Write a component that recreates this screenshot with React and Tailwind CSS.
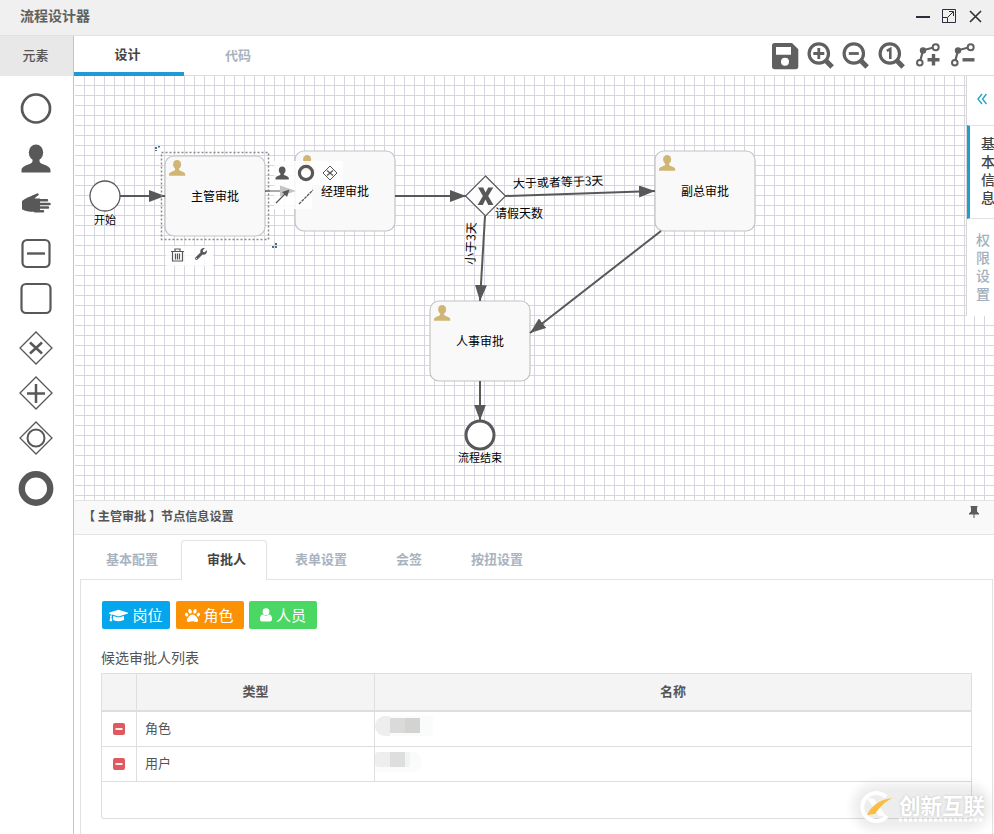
import React, { useState } from "react";
import { FaGraduationCap, FaPaw, FaWrench } from "react-icons/fa";

const INK = "#585858";

const Person = ({ x = 0, y = 0, scale = 1, fill = INK }) => (
    <g transform={`translate(${x} ${y}) scale(${scale})`} fill={fill}>
        <ellipse cx="14.5" cy="8" rx="7.200" ry="8" />
        <path d="M11 12h7v4.500c0 1.500 1.200 2.400 3 3.100 5 1.900 8 3 8 6.400v1.500q0 .5-.5.5H.5q-.5 0-.5-.5V26c0-3.400 3-4.500 8-6.400 1.800-.7 3-1.600 3-3.100z" />
    </g>
);

const Diamond = () => (
    <path d="M18 2 34 18 18 34 2 18z" fill="none" stroke={INK} strokeWidth="1.300" />
);

// Palette of BPMN elements, every drawing lives in a 36x36 box
const paletteItems = [
    {
        id: "start",
        gap: "mt-[14px]",
        art: <circle cx="18" cy="18.500" r="14" fill="none" stroke={INK} strokeWidth="2.700" />,
    },
    { id: "user", gap: "mt-[14px]", art: <Person x={3.500} y={4.500} /> },
    {
        id: "manual",
        gap: "mt-[9px]",
        art: (
            <g fill="none" stroke={INK} strokeWidth="2.500" strokeLinecap="round">
                <path d="M4 16c3.500-2.800 8.500-4.700 13-6.200 2.500-1 4-.4 2.500.8L16.500 13.500H22v13.300h-6c-5 0-9-.8-12-2.600z" fill={INK} stroke="none" />
                <path d="M14 12.200 19.500 9.500M20 15.300h9M20 19h11.500M20 22.600h10M17 26.200h8" />
            </g>
        ),
    },
    {
        id: "collapsed",
        gap: "mt-[14px]",
        art: (
            <g fill="none" stroke={INK} strokeWidth="2.200">
                <rect x="4.500" y="5" width="27" height="27" rx="4.500" />
                <path d="M9 18.500h18" strokeWidth="2.400" />
            </g>
        ),
    },
    {
        id: "task",
        gap: "mt-[9px]",
        art: <rect x="3.500" y="4" width="29" height="29" rx="4.500" fill="none" stroke={INK} strokeWidth="2.200" />,
    },
    {
        id: "exclusive",
        gap: "mt-[14px]",
        art: (
            <>
                <Diamond />
                <path d="m12 12.500 12 11m0-11-12 11" stroke={INK} strokeWidth="2.500" />
            </>
        ),
    },
    {
        id: "parallel",
        gap: "mt-[9px]",
        art: (
            <>
                <Diamond />
                <path d="M9 18.500h18M18 9v19" stroke={INK} strokeWidth="2.500" />
            </>
        ),
    },
    {
        id: "inclusive",
        gap: "mt-[9px]",
        art: (
            <>
                <Diamond />
                <circle cx="18" cy="18" r="8.500" fill="none" stroke={INK} strokeWidth="2" />
            </>
        ),
    },
    {
        id: "end",
        gap: "mt-[14px]",
        art: <circle cx="18" cy="18.500" r="14.200" fill="none" stroke={INK} strokeWidth="6.400" />,
    },
];

const Lens = ({ children }) => (
    <g fill="none" stroke="#606060">
        <circle cx="11.800" cy="11.500" r="9.700" strokeWidth="3.200" />
        <path d="m18.500 18.300 6.600 6.600" strokeWidth="5" />
        {children}
    </g>
);

const Bend = ({ children }) => (
    <g fill="none" stroke="#606060">
        <path d="M6.500 18 9 8.300 18.500 5.800" strokeWidth="2.200" />
        <circle cx="21.700" cy="5.200" r="3" strokeWidth="2" />
        <circle cx="5.800" cy="20.700" r="2.800" strokeWidth="2" />
        <circle cx="9" cy="8.500" r="3.200" fill="#606060" stroke="none" />
        {children}
    </g>
);

const tools = [
    {
        id: "save",
        art: (
            <path
                fill="#606060"
                fillRule="evenodd"
                d="M3.500 1H21l6.300 6.200v17.300q0 2.700-2.700 2.700H3.700Q1 27.200 1 24.500V3.500Q1 1 3.500 1zM5 5v7.700h15V5zM14 15.800a4 4 0 1 0 0 8 4 4 0 0 0 0-8z"
            />
        ),
    },
    { id: "zoomIn", art: <Lens><path d="M6.300 11.500h11M11.800 6v11" strokeWidth="2.800" /></Lens> },
    { id: "zoomOut", art: <Lens><path d="M6.800 11.500h10" strokeWidth="2.800" /></Lens> },
    { id: "zoomActual", art: <Lens><path d="m8.800 8.800 3.500-1.800v10" strokeWidth="2.600" /></Lens> },
    { id: "addBend", art: <Bend><path d="M13.500 17.800h12M19.500 12v11.600" strokeWidth="3.400" /></Bend> },
    { id: "removeBend", art: <Bend><path d="M13.500 17.800h12" strokeWidth="3.400" /></Bend> },
];

const tasks = [
    { name: "主管审批", x: 165, y: 156 },
    { name: "经理审批", x: 295, y: 151 },
    { name: "副总审批", x: 655, y: 151 },
    { name: "人事审批", x: 430, y: 301 },
];

const flows = [
    "M120 196H165",
    "M395 196H466",
    "M505 196 655 191",
    "M485 216 480 301",
    "M661 231 530 333",
    "M480 381V420.500",
];

const Diagram = () => (
    <svg width="920" height="424" viewBox="74 76 920 424" className="block" fontFamily="'Noto Sans CJK SC', sans-serif" fontSize="12">
        <defs>
            <pattern id="grid" x="74" y="75" width="10" height="10" patternUnits="userSpaceOnUse">
                <path d="M0 .5H10M.5 0V10" stroke="#d6d6de" strokeWidth="1" />
            </pattern>
            <marker id="arrow" markerUnits="userSpaceOnUse" markerWidth="17" markerHeight="12" refX="16" refY="6" orient="auto">
                <path d="M0 0 16 6 0 12z" fill={INK} />
            </marker>
        </defs>
        <rect x="75" y="76" width="919" height="424" fill="url(#grid)" />

        {/* Start event */}
        <circle cx="105" cy="196" r="15" fill="#fff" stroke={INK} strokeWidth="1.300" />
        <text x="105" y="224" textAnchor="middle" fontSize="11">开始</text>

        {tasks.map((task) => (
            <g key={task.name}>
                <rect x={task.x} y={task.y} width="100" height="80" rx="9" fill="#f9f9f9" stroke="#c4c4c4" strokeWidth="1.200" />
                <Person x={task.x + 4} y={task.y + 4} scale={0.56} fill="#d1b575" />
                <text x={task.x + 50} y={task.y + 45} textAnchor="middle">{task.name}</text>
            </g>
        ))}

        <path d="M265 191h7" stroke={INK} strokeWidth="1.500" />
        {flows.map((d) => (
            <path key={d} d={d} fill="none" stroke={INK} strokeWidth="2" markerEnd="url(#arrow)" />
        ))}

        {/* Exclusive gateway */}
        <path d="m485.500 176 20 20-20 20-20-20z" fill="#fdfdfd" stroke={INK} strokeWidth="1.200" />
        <path d="M478 187.500h5.200l2.400 5 2.600-5h5.100l-5.100 8.500 5.300 9h-5.200l-2.800-5.500-2.700 5.500h-5.200l5.300-9z" fill={INK} />
        <text x="495" y="218">请假天数</text>
        <text x="513" y="188" transform="rotate(-2 513 188)">大于或者等于3天</text>
        <text x="474.500" y="265" transform="rotate(-88 474.500 265)">小于3天</text>

        {/* End event */}
        <circle cx="480" cy="435" r="14" fill="#fff" stroke={INK} strokeWidth="3" />
        <text x="480" y="462" textAnchor="middle" fontSize="11">流程结束</text>

        {/* Selection frame of the active task */}
        <rect x="161.500" y="152.500" width="107" height="87" fill="none" stroke="#8a8a8a" strokeWidth="1.500" strokeDasharray="2 2" />
        <g fill="#4c7486">
            <path d="M155 147h2v2h-2zM158 146h2v1.500h-2zM155 150h2v1h-2zM272 246h2v2h-2zM275 243h2v2h-2zM275 246h2v2h-2z" />
        </g>

        {/* Quick actions */}
        <path d="M274 161h69v24h-31v24h-38z" fill="#fff" opacity=".85" />
        <path d="M270 191h11" stroke="#aaa" strokeWidth="2" />
        <path d="M280 185.500 296 191l-16 5.500z" fill="#c4c4c4" />
        <Person x={275.500} y={166.500} scale={0.46} />
        <circle cx="306" cy="173" r="6.600" fill="none" stroke={INK} strokeWidth="3.200" />
        <path d="m330 166 7 7-7 7-7-7z" fill="none" stroke={INK} />
        <path d="m327 170.500 6 5m0-5-6 5" stroke={INK} strokeWidth="1.300" />
        <path d="m276 203 10-10" stroke={INK} strokeWidth="1.300" />
        <path d="m289.500 189.500-2.500 7.500-5-5z" fill={INK} />
        <path d="m299 204 14-14" stroke={INK} strokeWidth="1.300" strokeDasharray="3 .8" />
        <path d="M166 246h47v20h-47z" fill="#fff" opacity=".8" />
        <g fill="none" stroke={INK} strokeWidth="1.200">
            <path d="M171 251.500h13M175 251v-2h5v2M172.500 252v9h10v-9M175.500 253.500v6M177.500 253.500v6M179.500 253.500v6" />
        </g>
        <FaWrench x="195" y="248" width="13" height="13" color={INK} />
    </svg>
);

const panelTabs = ["基本配置", "审批人", "表单设置", "会签", "按扭设置"];

const candidates = [
    { type: "角色", mask: "first" },
    { type: "用户", mask: "second" },
];

const Mask = ({ kind }) =>
    kind === "first" ? (
        <div className="-mt-[7px] flex h-[20px] w-[58px] items-center overflow-hidden rounded-l-full rounded-r-lg bg-[#fafbfb]">
            <span className="h-full w-[15px] bg-[#eeeeee]" />
            <span className="h-[15px] w-[15px] bg-[#dadada]" />
            <span className="h-[15px] w-[15px] bg-[#d3d3d2]" />
        </div>
    ) : (
        <div className="-mt-[5px] flex h-[20px] w-[46px] items-start overflow-hidden rounded-r-lg bg-[#fafbfb]">
            <span className="h-[15px] w-[15px] rounded-l bg-[#eeeeee]" />
            <span className="h-[15px] w-[15px] bg-[#dedede]" />
            <span className="h-[15px] w-[5px] bg-[#f2f3f3]" />
        </div>
    );

const Watermark = () => (
    <div className="absolute right-[9px] bottom-[9px] flex items-center gap-[5px] rounded-full bg-black/7 shadow-[0_0_10px_6px_rgba(0,0,0,0.07)]">
        <svg width="36" height="36" viewBox="0 0 36 36" fill="none">
            <path d="M29 27a14 14 0 1 1-1-19" stroke="#fff" strokeWidth="4" />
            <path d="m9 9 7 1 12 17h-7z" fill="#fff" />
            <path d="M9 26c4-9 13-16 26-17-8 3-14 10-18 16z" fill="#f8bd42" />
        </svg>
        <div className="flex flex-col items-start text-white [text-shadow:0_0_3px_#c4c4c4]">
            <span className="flex h-[25px] items-center text-[21.500px] leading-[25px] font-bold">创新互联</span>
            <svg width="84" height="6" viewBox="0 0 84 6" stroke="#fff" strokeWidth="3" strokeDasharray="3 2">
                <path d="M0 3h84" />
            </svg>
        </div>
    </div>
);

const App = () => {
    const [activeTab, setActiveTab] = useState("审批人");

    return (
        <div className="relative flex h-[834px] w-[994px] flex-col overflow-hidden bg-white font-['Noto_Sans_CJK_SC',sans-serif] text-[13px] text-[#555]">
            {/* Title bar */}
            <header className="flex h-9 shrink-0 items-center justify-between border-b border-[#e0e0e0] bg-[#f0f0f0] pr-[12px] pb-[4px] pl-[20px]">
                <h1 className="text-[14px] font-semibold text-[#606060]">流程设计器</h1>
                <svg width="68" height="18" viewBox="0 0 68 18" fill="none" stroke="#2e2d3c">
                    <path d="M2 10h14" strokeWidth="2" />
                    <path d="M28.500 2.500h13v13h-13zM28.500 10.500h5v5h-5zM34 10l5-5M35 4.500h4.500V9" />
                    <path d="m56 4 11 11m0-11L56 15" strokeWidth="1.600" />
                </svg>
            </header>

            <div className="flex min-h-0 flex-1">
                {/* Palette */}
                <aside className="w-[74px] shrink-0 border-r border-[#c4c4c4]">
                    <div className="flex h-10 items-center justify-center bg-[#e8e8e8] pr-[2px] pb-[2px] font-medium">元素</div>
                    <div className="flex flex-col items-center pr-px">
                        {paletteItems.map((item) => (
                            <svg key={item.id} width="36" height="36" viewBox="0 0 36 36" className={`${item.gap} shrink-0`}>
                                {item.art}
                            </svg>
                        ))}
                    </div>
                </aside>

                <main className="flex min-w-0 flex-1 flex-col">
                    <div className="flex h-10 shrink-0 border-b border-[#dddddd]">
                        <button className="-mb-px w-[110px] border-b-4 border-[#1f9ad6] pr-[3px] font-semibold text-[#444]">设计</button>
                        <button className="w-[108px] pb-[2px] font-semibold text-[#a9b3c0]">代码</button>
                        <div className="ml-auto flex items-center pr-[13px]">
                            {tools.map((tool) => (
                                <span key={tool.id} className="flex w-[35.600px] justify-center">
                                    <svg width="28" height="28" viewBox="0 0 28 28">{tool.art}</svg>
                                </span>
                            ))}
                        </div>
                    </div>

                    <div className="relative h-[424px] shrink-0 overflow-hidden">
                        <Diagram />
                        {/* Collapsible settings rail */}
                        <div className="absolute top-0 right-0 h-[240px] w-[28px] overflow-hidden border-l border-[#d6d6da] bg-white text-[14px] leading-[18px] font-medium">
                            <div className="flex h-[49px] items-center justify-center pb-[3px] pl-[3px]">
                                <svg width="12" height="12" viewBox="0 0 12 12" fill="none" stroke="#2aa5bf" strokeWidth="1.400">
                                    <path d="M6 1 2 6l4 5M10.500 1l-4 5 4 5" />
                                </svg>
                            </div>
                            <div className="h-[94px] w-[40px] border-y border-l-[3px] border-y-[#e2e2e2] border-l-[#1f9fc9] pt-[8px] pl-[11px] text-[#444]">
                                <div className="w-[14px]">基本信息</div>
                            </div>
                            <div className="mt-[11px] ml-[9px] w-[14px] text-[#a3b0c0]">权限设置</div>
                        </div>
                    </div>

                    {/* Node settings */}
                    <section className="flex min-h-0 flex-1 flex-col">
                        <div className="flex h-[35px] shrink-0 justify-between border-y border-[#e4e4e4] bg-[#f9f9f9] pr-[15px] pl-[9px]">
                            <span className="pt-[6px] text-[12.100px] font-semibold">【 主管审批 】节点信息设置</span>
                            <svg width="10" height="12" viewBox="0 0 10 12" className="mt-[5px]" fill="#5c5c5c">
                                <path d="M1.500 0h7v1.300H8V5.500l2 2V8.500H5.500V12h-1V8.500H0v-1l2-2V1.300h-.5z" />
                            </svg>
                        </div>
                        <nav className="ml-[6px] flex h-[44px] shrink-0 pt-[5px]">
                            {panelTabs.map((tab) => (
                                <button
                                    key={tab}
                                    onClick={() => setActiveTab(tab)}
                                    className={`mr-[2px] h-[40px] rounded-t border pr-[20px] pb-[2px] pl-[25px] text-[13px] font-semibold ${activeTab === tab
                                        ? "relative border-[#e2e2e2] border-b-white bg-white text-[#444]"
                                        : "border-transparent text-[#a9b3c0]"
                                        }`}
                                >
                                    {tab}
                                </button>
                            ))}
                        </nav>
                        <div className="mr-px ml-[6px] flex-1 border-x border-t border-[#e2e2e2] pt-[21px] pr-[20px] pl-[20px]">
                            <div className="ml-px flex text-[15px] leading-[28px] text-white">
                                <button className="mr-[6px] flex h-[28px] w-[68px] items-center justify-center gap-[4px] rounded-[2px] bg-[#06a6ec]">
                                    <FaGraduationCap size={19} />岗位
                                </button>
                                <button className="mr-[5px] flex h-[28px] w-[68px] items-center justify-center gap-[3px] rounded-[2px] bg-[#fb9205] pr-px">
                                    <FaPaw size={15} />角色
                                </button>
                                <button className="flex h-[28px] w-[68px] items-center justify-center gap-[4px] rounded-[2px] bg-[#4bd763]">
                                    <svg width="12" height="14" viewBox="0 0 12 14" fill="currentColor">
                                        <circle cx="6" cy="3.700" r="3.400" />
                                        <path d="M3 6.500c-2 0-3 1.800-3 4.500C0 12.700.8 13.500 2.300 13.500h7.400c1.500 0 2.300-.8 2.300-2.500 0-2.700-1-4.500-3-4.500-1.800 1.500-4.200 1.500-6 0z" />
                                    </svg>
                                    人员
                                </button>
                            </div>
                            <p className="mt-[18px] h-[26px] text-[14px] leading-[21px]">候选审批人列表</p>
                            <div className="h-[146px] w-[871px] rounded-b-[2px] border border-[#dedede]">
                                <div className="grid h-[38px] grid-cols-[35px_238px_1fr] border-b-2 border-[#dedede] bg-[#f4f4f4] text-center leading-[34px] font-semibold">
                                    <span className="border-r border-[#dedede]" />
                                    <span className="border-r border-[#dedede]">类型</span>
                                    <span>名称</span>
                                </div>
                                {candidates.map((row) => (
                                    <div key={row.type} className="grid h-[35px] grid-cols-[35px_238px_1fr] border-b border-[#dedede]">
                                        <span className="flex items-center justify-center border-r border-[#dedede] pb-px">
                                            <svg width="12" height="12" viewBox="0 0 12 12">
                                                <rect width="12" height="12" rx="2" fill="#df5a60" />
                                                <path d="M2.500 6h7" stroke="#fff" strokeWidth="1.800" />
                                            </svg>
                                        </span>
                                        <span className="border-r border-[#dedede] pl-[8px] leading-[31px]">{row.type}</span>
                                        <span className="flex items-center">
                                            <Mask kind={row.mask} />
                                        </span>
                                    </div>
                                ))}
                            </div>
                        </div>
                    </section>
                </main>
            </div>
            <Watermark />
        </div>
    );
};

export default App;
